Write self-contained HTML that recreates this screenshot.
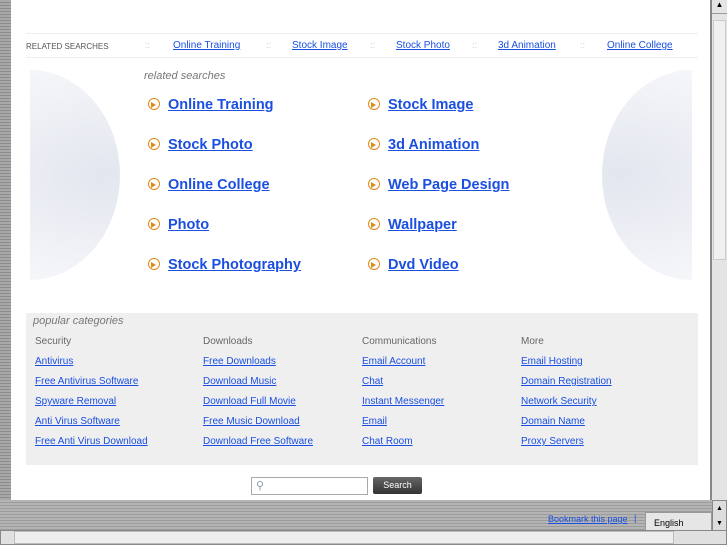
<!DOCTYPE html>
<html><head><style>
*{margin:0;padding:0;box-sizing:border-box}
body{width:727px;height:545px;overflow:hidden;position:relative;background:#9a9a9a;font-family:"Liberation Sans",sans-serif}
.left{position:absolute;left:0;top:0;width:11px;height:500px;background:repeating-linear-gradient(#a8a8a8 0 2px,#8c8c8c 2px 3px)}
.main{position:absolute;left:11px;top:0;width:700px;height:500px;background:#fff;border-right:1px solid #888}
.vs{position:absolute;left:711px;top:0;width:16px;height:500px;background:#e4e4e4;border-left:1px solid #888}
.bot{position:absolute;left:0;top:500px;width:727px;height:45px;background:repeating-linear-gradient(#b4b4b4 0 2px,#9c9c9c 2px 3px)}
a{color:#1a4fe0;text-decoration:underline}
.rs{position:absolute;top:40px;font-size:10px}
.sep{position:absolute;top:40px;font-size:9px;color:#ccc}
.big{position:absolute;font-size:14.5px;font-weight:bold}
.arr{position:absolute;width:12px;height:12px;border-radius:50%;border:1.5px solid #e08a1a;background:#fff}
.arr::after{content:"";position:absolute;left:2px;top:2.5px;border-left:5px solid #e08a1a;border-top:3px solid transparent;border-bottom:3px solid transparent}
.pop{position:absolute;left:26px;top:313px;width:672px;height:152px;background:#efefef}
.col{position:absolute;top:332px;font-size:10px;line-height:20px;color:#666}
.col a{display:block}
</style></head><body>
<div class="left"></div>
<div class="main">
<div style="position:absolute;left:15px;top:33px;width:672px;border-top:1px solid #eee"></div>
<div style="position:absolute;left:15px;top:57px;width:672px;border-top:1px solid #eee"></div>
<div style="position:absolute;left:-71px;top:70px;width:180px;height:210px;border-radius:50%;background:radial-gradient(ellipse at 90% 50%,#e2e6ee,#f6f7fa 80%);clip-path:inset(0 0 0 90px)"></div>
<div style="position:absolute;left:591px;top:70px;width:180px;height:210px;border-radius:50%;background:radial-gradient(ellipse at 10% 50%,#e2e6ee,#f6f7fa 80%);clip-path:inset(0 90px 0 0)"></div>
</div>
<div class="rs" style="left:26px;color:#555;font-size:8px;top:42px">RELATED SEARCHES</div>
<div class="sep" style="left:145px">::</div><a class="rs" style="left:173px">Online Training</a>
<div class="sep" style="left:266px">::</div><a class="rs" style="left:292px">Stock Image</a>
<div class="sep" style="left:370px">::</div><a class="rs" style="left:396px">Stock Photo</a>
<div class="sep" style="left:472px">::</div><a class="rs" style="left:498px">3d Animation</a>
<div class="sep" style="left:580px">::</div><a class="rs" style="left:607px">Online College</a>
<div style="position:absolute;left:144px;top:70px;font-size:11px;font-style:italic;color:#777">related searches</div>
<div class="arr" style="left:148px;top:98px"></div><a class="big" style="left:168px;top:97px">Online Training</a>
<div class="arr" style="left:368px;top:98px"></div><a class="big" style="left:388px;top:97px">Stock Image</a>
<div class="arr" style="left:148px;top:138px"></div><a class="big" style="left:168px;top:137px">Stock Photo</a>
<div class="arr" style="left:368px;top:138px"></div><a class="big" style="left:388px;top:137px">3d Animation</a>
<div class="arr" style="left:148px;top:178px"></div><a class="big" style="left:168px;top:177px">Online College</a>
<div class="arr" style="left:368px;top:178px"></div><a class="big" style="left:388px;top:177px">Web Page Design</a>
<div class="arr" style="left:148px;top:218px"></div><a class="big" style="left:168px;top:217px">Photo</a>
<div class="arr" style="left:368px;top:218px"></div><a class="big" style="left:388px;top:217px">Wallpaper</a>
<div class="arr" style="left:148px;top:258px"></div><a class="big" style="left:168px;top:257px">Stock Photography</a>
<div class="arr" style="left:368px;top:258px"></div><a class="big" style="left:388px;top:257px">Dvd Video</a>
<div class="pop"><div style="position:absolute;left:7px;top:2px;font-size:11px;font-style:italic;color:#777">popular categories</div></div>
<div class="col" style="left:35px">Security<a>Antivirus</a><a>Free Antivirus Software</a><a>Spyware Removal</a><a>Anti Virus Software</a><a>Free Anti Virus Download</a></div>
<div class="col" style="left:203px">Downloads<a>Free Downloads</a><a>Download Music</a><a>Download Full Movie</a><a>Free Music Download</a><a>Download Free Software</a></div>
<div class="col" style="left:362px">Communications<a>Email Account</a><a>Chat</a><a>Instant Messenger</a><a>Email</a><a>Chat Room</a></div>
<div class="col" style="left:521px">More<a>Email Hosting</a><a>Domain Registration</a><a>Network Security</a><a>Domain Name</a><a>Proxy Servers</a></div>
<div style="position:absolute;left:251px;top:477px;width:117px;height:18px;border:1px solid #aaa;background:#fff"><span style="position:absolute;left:4px;top:1px;font-size:11px;color:#89a">&#9906;</span></div>
<div style="position:absolute;left:373px;top:477px;width:49px;height:17px;background:linear-gradient(#666,#333);border-radius:2px;color:#fff;font-size:9px;text-align:center;line-height:16px">Search</div>
<div class="vs"><div style="height:14px;border-bottom:1px solid #999;font-size:8px;text-align:center">▲</div><div style="position:absolute;left:1px;top:20px;width:13px;height:240px;background:#f0f0f0;border:1px solid #ccc"></div></div>
<div class="bot">
<a style="position:absolute;left:548px;top:14px;font-size:9px">Bookmark this page</a><span style="position:absolute;left:634px;top:13px;font-size:9px;color:#1a4fe0">|</span>
<div style="position:absolute;left:645px;top:12px;width:67px;height:20px;background:#e6e6e6;border:1px solid #999;font-size:9px;line-height:20px;padding-left:8px">English</div>
<div style="position:absolute;left:712px;top:0;width:15px;height:32px;background:#ddd;border:1px solid #888;font-size:7px;text-align:center;line-height:15px">▲<br>▼</div>
<div style="position:absolute;left:0;top:30px;width:727px;height:15px;background:#e0e0e0;border:1px solid #888"></div>
<div style="position:absolute;left:14px;top:31px;width:660px;height:13px;background:#eee;border:1px solid #bbb"></div>
</div>
</body></html>
